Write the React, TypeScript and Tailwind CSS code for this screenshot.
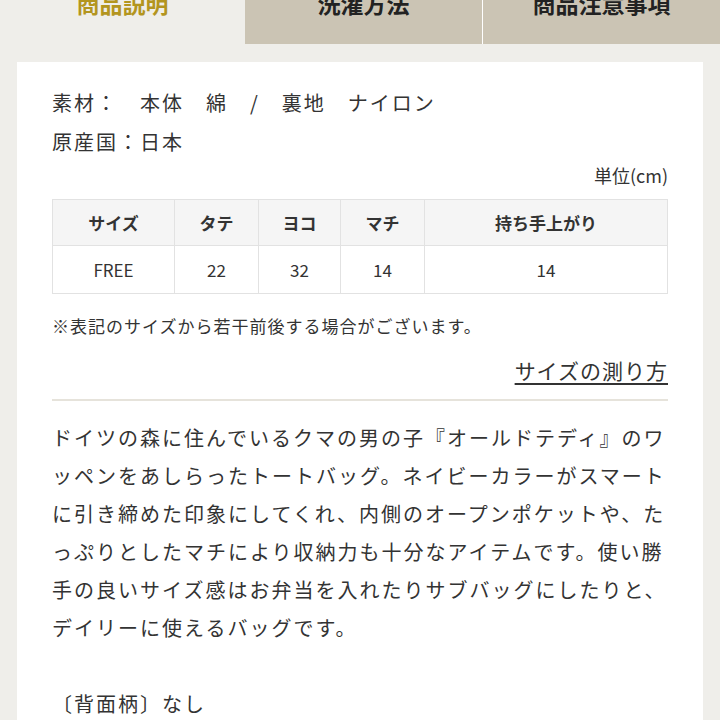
const font = { fontFamily: '"Noto Sans CJK JP", "Noto Sans", sans-serif' };

const tabs = [
  { label: "商品説明", active: true, w: "w-[245px]" },
  { label: "洗濯方法", active: false, w: "w-[237px]" },
  { label: "商品注意事項", active: false, w: "flex-1" },
];

const heads = ["サイズ", "タテ", "ヨコ", "マチ", "持ち手上がり"];
const row = ["FREE", "22", "32", "14", "14"];
const widths = ["w-[122px]", "w-[84px]", "w-[82px]", "w-[84px]", ""];

const body = [
  "ドイツの森に住んでいるクマの男の子『オールドテディ』のワ",
  "ッペンをあしらったトートバッグ。ネイビーカラーがスマート",
  "に引き締めた印象にしてくれ、内側のオープンポケットや、た",
  "っぷりとしたマチにより収納力も十分なアイテムです。使い勝",
  "手の良いサイズ感はお弁当を入れたりサブバッグにしたりと、",
  "デイリーに使えるバッグです。",
];

export default function App() {
  return (
    <div className="w-[720px] h-[720px] overflow-hidden bg-[#efeeea] text-[#333]" style={font}>
      {/* tabs, top is cut off */}
      <div className="flex -mt-[38px] h-[82px]">
        {tabs.map((t, i) => (
          <div
            key={t.label}
            className={`${t.w} flex items-center justify-center text-[23px] font-bold ${
              t.active ? "text-[#b3951f]" : "bg-[#cbc4b4] text-[#222]"
            } ${i === 2 ? "border-l border-white" : ""}`}
          >
            {t.label}
          </div>
        ))}
      </div>

      <div className="mx-[17px] mt-[18px] bg-white px-[35px] pt-[21px] pb-10">
        <div className="text-[20px] leading-[39px] tracking-[2px]">
          <p className="whitespace-pre">素材：　本体　綿　/　裏地　ナイロン</p>
          <p>原産国：日本</p>
        </div>
        <p className="text-right text-[18px] leading-[28px]">単位(cm)</p>

        <table className="mt-[10px] w-full border-collapse text-center text-[17px]">
          <thead>
            <tr className="bg-[#f5f5f5] h-[46px]">
              {heads.map((h, i) => (
                <th key={h} className={`${widths[i]} border border-[#e2e2e2] font-bold`}>
                  {h}
                </th>
              ))}
            </tr>
          </thead>
          <tbody>
            <tr className="h-[48px]">
              {row.map((c, i) => (
                <td key={i} className="border border-[#e2e2e2]">
                  {c}
                </td>
              ))}
            </tr>
          </tbody>
        </table>

        <p className="mt-[18px] text-[17px] leading-[28px] tracking-[1px]">※表記のサイズから若干前後する場合がございます。</p>
        <p className="mt-[15px] text-right text-[21px] leading-[30px] tracking-[1px]">
          <span className="underline decoration-[1.5px] underline-offset-[4px]">サイズの測り方</span>
        </p>
        <div className="mt-[14px] h-[2px] bg-[#e6e3db]" />

        <div className="mt-[18px] text-[20px] leading-[38px] tracking-[2px]">
          {body.map((l) => (
            <p key={l} className="whitespace-nowrap">
              {l}
            </p>
          ))}
          <p>&nbsp;</p>
          <p>〔背面柄〕なし</p>
        </div>
      </div>
    </div>
  );
}
